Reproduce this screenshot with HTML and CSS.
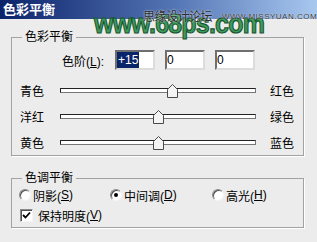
FILE: index.html
```html
<!DOCTYPE html>
<html lang="zh-CN">
<head>
    <meta charset="UTF-8">
    <title>色彩平衡</title>
    <link rel="stylesheet" href="styles.css">
</head>
<body>
    <div class="titlebar">色彩平衡</div>

    <!-- watermark over the title bar -->
    <div class="watermark">
        <span class="wm-site">www.68ps.com</span>
        <span class="wm-cn">思缘设计论坛</span>
        <span class="wm-en">WWW.MISSYUAN.COM</span>
    </div>

    <div class="content">
        <fieldset class="group group-color">
            <legend>色彩平衡</legend>
            <div class="level-row">
                <label class="level-label">色阶(<u>L</u>):</label>
                <div class="field"><span class="selected">+15</span></div>
                <div class="field">0</div>
                <div class="field">0</div>
            </div>

            <div class="slider-row">
                <span>青色</span>
                <div class="track">
                    <svg class="thumb" style="left: 57.5%" width="11" height="14" viewBox="0 0 11 14"><polygon points="5.5,0.5 10.5,5.5 10.5,13.5 0.5,13.5 0.5,5.5" fill="#f4f4f4" stroke="#4a4a4a"/></svg>
                </div>
                <span class="right">红色</span>
            </div>
            <div class="slider-row">
                <span>洋红</span>
                <div class="track">
                    <svg class="thumb" style="left: 50%" width="11" height="14" viewBox="0 0 11 14"><polygon points="5.5,0.5 10.5,5.5 10.5,13.5 0.5,13.5 0.5,5.5" fill="#f4f4f4" stroke="#4a4a4a"/></svg>
                </div>
                <span class="right">绿色</span>
            </div>
            <div class="slider-row">
                <span>黄色</span>
                <div class="track">
                    <svg class="thumb" style="left: 50%" width="11" height="14" viewBox="0 0 11 14"><polygon points="5.5,0.5 10.5,5.5 10.5,13.5 0.5,13.5 0.5,5.5" fill="#f4f4f4" stroke="#4a4a4a"/></svg>
                </div>
                <span class="right">蓝色</span>
            </div>
        </fieldset>

        <fieldset class="group group-tone">
            <legend>色调平衡</legend>
            <div class="radio-row">
                <label class="option option-1"><span class="radio"></span>阴影(<u>S</u>)</label>
                <label class="option option-2"><span class="radio checked"></span>中间调(<u>D</u>)</label>
                <label class="option"><span class="radio"></span>高光(<u>H</u>)</label>
            </div>
            <div class="check-row">
                <span class="checkbox">
                    <svg width="9" height="9" viewBox="0 0 9 9"><path d="M1 4 L3.5 6.5 L8 1.5" fill="none" stroke="#000" stroke-width="1.8"/></svg>
                </span>
                保持明度(<u>V</u>)
            </div>
        </fieldset>
    </div>
</body>
</html>
```

FILE: styles.css
```css
* {
    box-sizing: border-box;
}

body {
    margin: 0;
    width: 317px;
    height: 242px;
    overflow: hidden;
    position: relative;
    background: #ececec;
    font-family: "Liberation Sans", "Noto Sans CJK SC", sans-serif;
    font-size: 12px;
    color: #000;
}

.titlebar {
    height: 19px;
    line-height: 19px;
    padding-left: 3px;
    background: linear-gradient(to right, #0c236a, #5475b4 55%, #a8c8f0);
    color: #fff;
    font-size: 13px;
    font-weight: bold;
}

.watermark {
    position: absolute;
    left: 94px;
    top: 5px;
    width: 218px;
    height: 30px;
    white-space: nowrap;
    pointer-events: none;
}

.wm-site {
    position: absolute;
    left: 0;
    top: 2px;
    font-size: 25px;
    font-weight: bold;
    letter-spacing: -0.8px;
    color: #3d9a5b;
    -webkit-text-stroke: 1px #17552f;
    transform: scaleY(1.12);
    transform-origin: left top;
}

.wm-cn {
    position: absolute;
    left: 49px;
    top: 2px;
    font-size: 12px;
    letter-spacing: -0.5px;
    color: #2a2a2a;
    text-shadow: 0 0 2px #fff;
}

.wm-en {
    position: absolute;
    left: 128px;
    top: 7px;
    font-size: 8px;
    letter-spacing: 0.5px;
    color: #333;
    text-shadow: 0 0 1px #fff;
}

.content {
    padding: 0 13px 0 11px;
}

.group {
    margin: 0;
    padding: 0;
    min-width: 0;
    border: 1px solid #a2a2a2;
    box-shadow: 1px 1px 0 #fff;
}

.group legend {
    margin-left: 10px;
    padding: 0 3px;
    line-height: 14px;
}

.group-color {
    margin-top: 11px;
}

.level-row {
    display: flex;
    align-items: center;
    margin-top: 6px;
    padding-left: 50px;
}

.level-label {
    width: 43px;
    margin-right: 10px;
}

.field {
    width: 40px;
    height: 20px;
    margin-right: 10px;
    background: #fff;
    border: 2px solid;
    border-color: #6f6f6f #dcdcdc #dcdcdc #6f6f6f;
    line-height: 16px;
}

.selected {
    display: inline-block;
    padding: 0 1px;
    background: #0a246a;
    color: #fff;
}

.slider-row {
    display: grid;
    grid-template-columns: 40px 196px auto;
    align-items: center;
    height: 26px;
    padding-left: 8px;
}

.level-row + .slider-row {
    margin-top: 7px;
}

.slider-row .right {
    margin-left: 14px;
}

.track {
    position: relative;
    height: 5px;
    background: #fff;
    border: 1px solid #222;
    border-right-color: #777;
    border-bottom-color: #777;
}

.thumb {
    position: absolute;
    top: -5px;
    margin-left: -5.5px;
}

.group-tone {
    margin-top: 15px;
    padding-bottom: 3px;
}

.radio-row {
    display: flex;
    align-items: center;
    height: 18px;
    margin-top: 1px;
    padding-left: 7px;
}

.option {
    display: flex;
    align-items: center;
}

.option-1 {
    width: 91px;
}

.option-2 {
    width: 102px;
}

.radio {
    position: relative;
    width: 12px;
    height: 12px;
    margin-right: 2px;
    border-radius: 50%;
    background: #fff;
    border: 1px solid;
    border-color: #8a8a8a #f4f4f4 #f4f4f4 #8a8a8a;
    box-shadow: inset 1px 1px 0 #505050;
}

.radio.checked::after {
    content: "";
    position: absolute;
    left: 3px;
    top: 3px;
    width: 4px;
    height: 4px;
    border-radius: 50%;
    background: #000;
}

.check-row {
    display: flex;
    align-items: center;
    height: 18px;
    margin-top: 2px;
    padding-left: 8px;
}

.checkbox {
    display: flex;
    align-items: center;
    justify-content: center;
    width: 13px;
    height: 13px;
    margin-right: 5px;
    background: #fff;
    border: 1px solid;
    border-color: #8a8a8a #f4f4f4 #f4f4f4 #8a8a8a;
    box-shadow: inset 1px 1px 0 #505050;
}
```
